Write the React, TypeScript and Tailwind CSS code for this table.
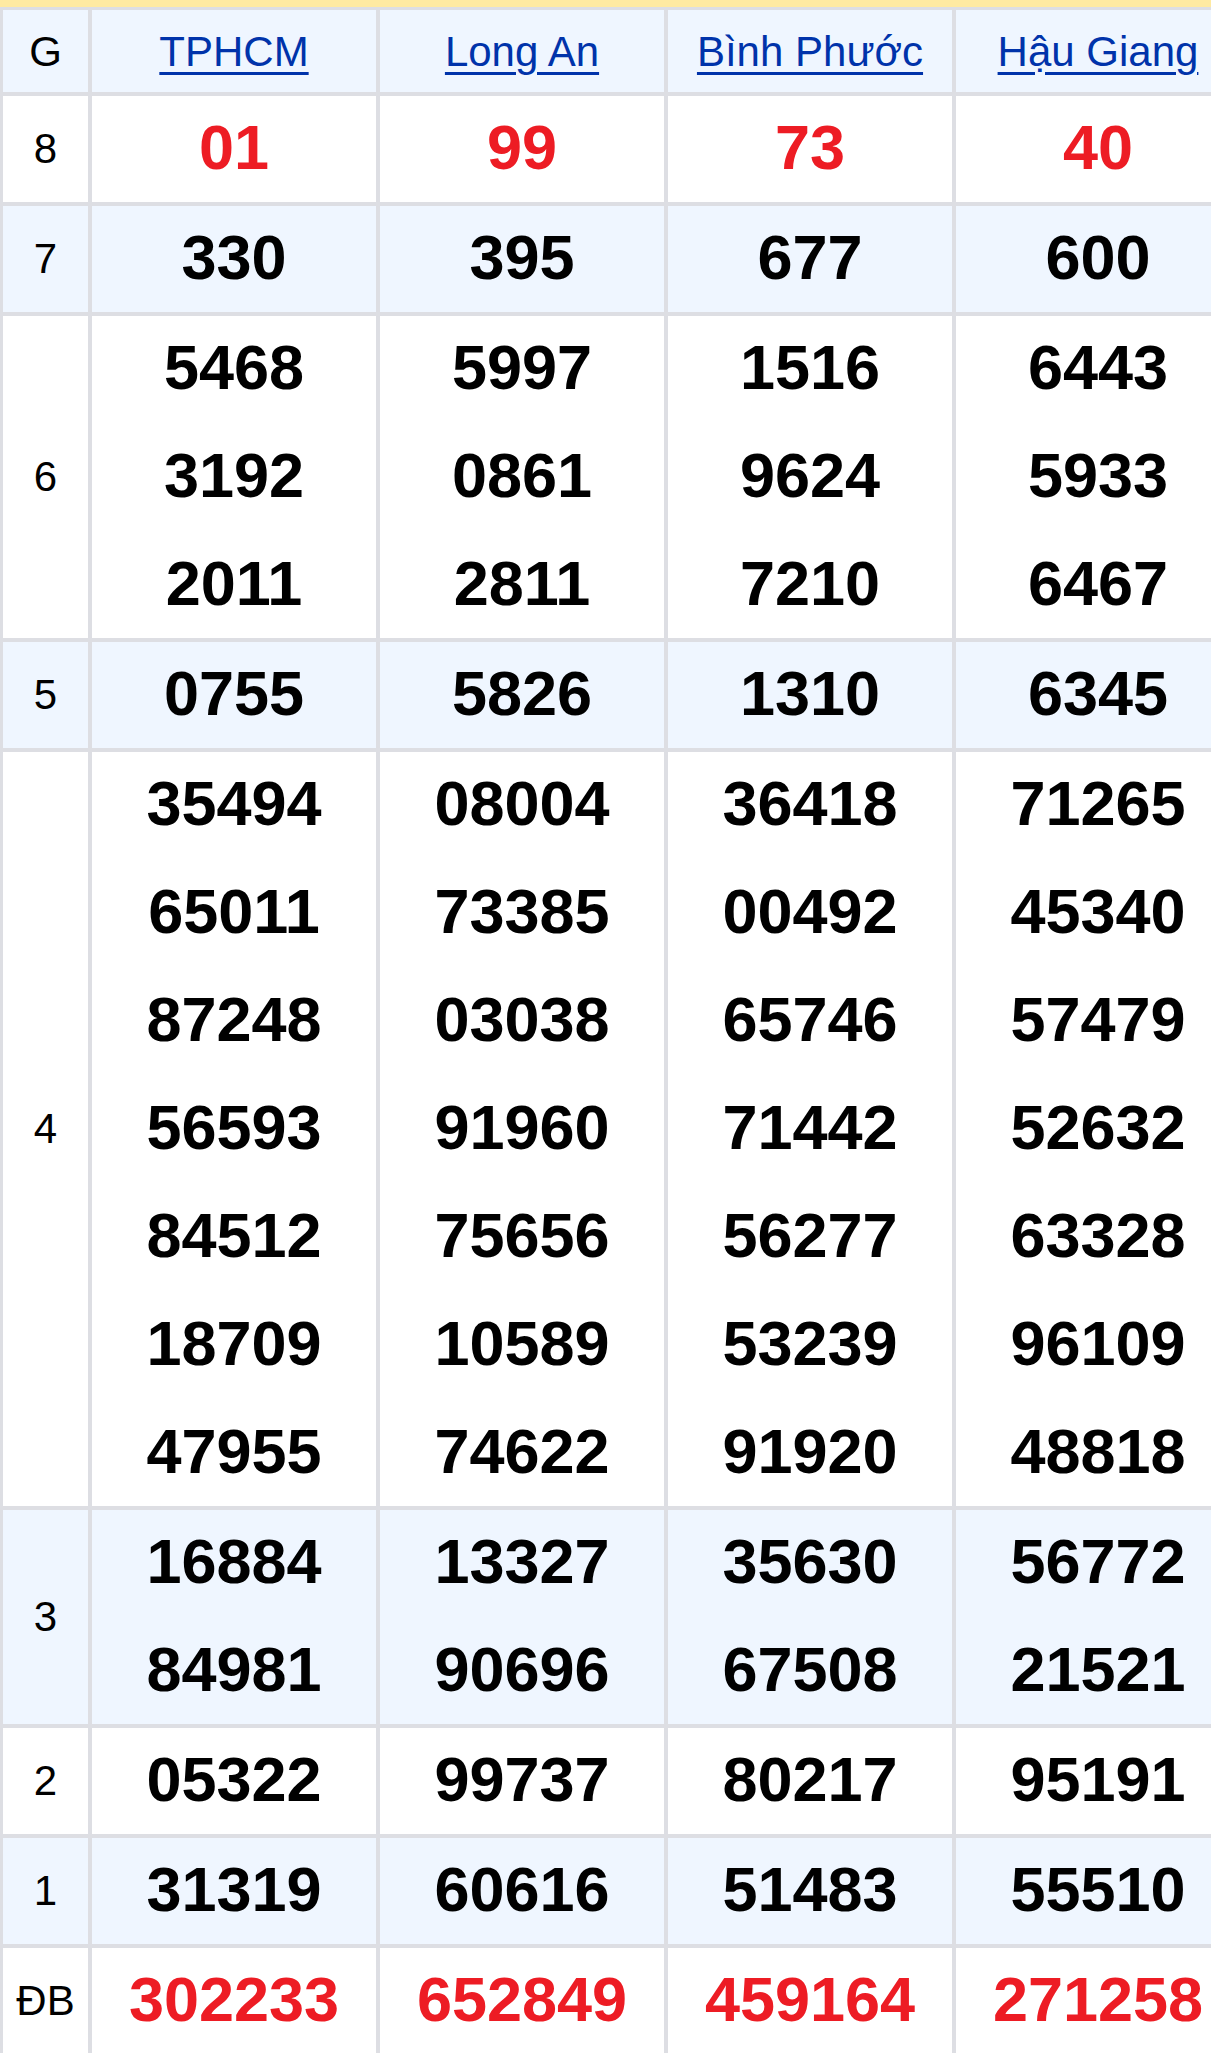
const provinces = ["TPHCM", "Long An", "Bình Phước", "Hậu Giang"];

type Prize = { label: string; height: string; red?: boolean; values: string[][] };

const prizes: Prize[] = [
  { label: "8", height: "h-[106px]", red: true, values: [["01"], ["99"], ["73"], ["40"]] },
  { label: "7", height: "h-[106px]", values: [["330"], ["395"], ["677"], ["600"]] },
  {
    label: "6",
    height: "h-[322px]",
    values: [
      ["5468", "3192", "2011"],
      ["5997", "0861", "2811"],
      ["1516", "9624", "7210"],
      ["6443", "5933", "6467"],
    ],
  },
  { label: "5", height: "h-[106px]", values: [["0755"], ["5826"], ["1310"], ["6345"]] },
  {
    label: "4",
    height: "h-[754px]",
    values: [
      ["35494", "65011", "87248", "56593", "84512", "18709", "47955"],
      ["08004", "73385", "03038", "91960", "75656", "10589", "74622"],
      ["36418", "00492", "65746", "71442", "56277", "53239", "91920"],
      ["71265", "45340", "57479", "52632", "63328", "96109", "48818"],
    ],
  },
  {
    label: "3",
    height: "h-[214px]",
    values: [
      ["16884", "84981"],
      ["13327", "90696"],
      ["35630", "67508"],
      ["56772", "21521"],
    ],
  },
  { label: "2", height: "h-[106px]", values: [["05322"], ["99737"], ["80217"], ["95191"]] },
  { label: "1", height: "h-[106px]", values: [["31319"], ["60616"], ["51483"], ["55510"]] },
  { label: "ĐB", height: "h-[106px]", red: true, values: [["302233"], ["652849"], ["459164"], ["271258"]] },
];

const App = () => {
  return (
    <div className="w-[1211px] h-[2053px] overflow-hidden bg-white font-['Liberation_Sans',Arial,sans-serif]">
      {/* yellow strip above the table */}
      <div className="h-[7px] w-[1243px] bg-[#ffeaa1]" />
      <div className="grid w-[1243px] grid-cols-[85px_284px_284px_284px_284px] gap-[4px] bg-[#dddee3] p-[3px]">
        {/* header */}
        <div className="h-[82px] bg-[#eff6ff] flex items-center justify-center text-[42px] text-black">G</div>
        {provinces.map((p) => (
          <div key={p} className="h-[82px] bg-[#eff6ff] flex items-center justify-center">
            <a href="#" className="text-[42px] text-[#0033aa] underline decoration-[3px] underline-offset-[6px]">
              {p}
            </a>
          </div>
        ))}

        {prizes.map((prize, i) => {
          const bg = i % 2 === 0 ? "bg-white" : "bg-[#eff6ff]";
          return [
            <div
              key={prize.label}
              className={`${prize.height} ${bg} flex items-center justify-center pb-[2px] text-[42px] text-black`}
            >
              {prize.label}
            </div>,
            ...prize.values.map((col, c) => (
              <div
                key={`${prize.label}-${c}`}
                className={`${prize.height} ${bg} flex flex-col justify-center overflow-visible`}
              >
                {col.map((v) => (
                  <div
                    key={v}
                    className={`h-[108px] shrink-0 flex items-center justify-center pb-[3px] text-[63px] font-bold ${
                      prize.red ? "text-[#ed1c24]" : "text-black"
                    }`}
                  >
                    {v}
                  </div>
                ))}
              </div>
            )),
          ];
        })}
      </div>
    </div>
  );
};

export default App;
